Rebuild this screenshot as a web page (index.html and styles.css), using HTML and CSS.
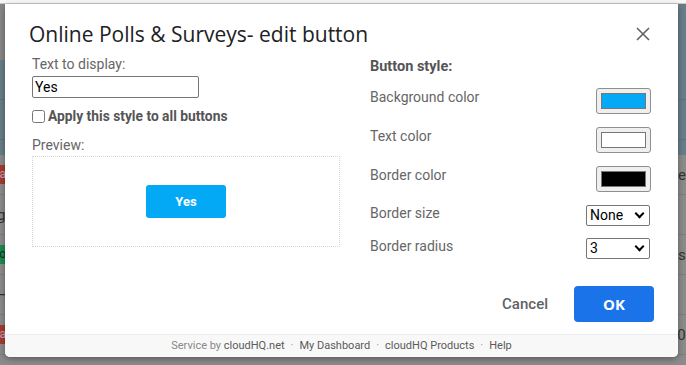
FILE: index.html
```html
<!DOCTYPE html>
<html lang="en">
<head>
    <meta charset="UTF-8">
    <meta name="viewport" content="width=device-width, initial-scale=1.0">
    <title>Online Polls &amp; Surveys - edit button</title>
    <link rel="stylesheet" href="styles.css">
</head>
<body>
    <!-- dimmed mailbox behind the dialog -->
    <div class="page">
        <div class="topbar"></div>
        <div class="band band-gray"></div>
        <div class="band band-slate">
            <div class="row-line"></div>
            <div class="row-line"></div>
        </div>
        <div class="mail-list">
            <div class="mail"><span class="tag tag-red">na</span><span class="tail">ea</span></div>
            <div class="mail"><span class="lead">g</span></div>
            <div class="mail"><span class="tag tag-green">to</span><span class="tail">sh</span></div>
            <div class="mail"><span class="lead">H</span></div>
            <div class="mail"><span class="tag tag-red">na</span><span class="tail">03</span></div>
        </div>
    </div>

    <div class="dialog">
        <div class="dialog-head">
            <h1>Online Polls &amp; Surveys- edit button</h1>
            <button class="close" title="Close">
                <svg width="14" height="14" viewBox="0 0 14 14"><path d="M1 1L13 13M13 1L1 13" stroke="#5f6368" stroke-width="1.6" fill="none"/></svg>
            </button>
        </div>

        <div class="dialog-body">
            <div class="col-left">
                <label class="field-label" for="btn-text">Text to display:</label>
                <input type="text" id="btn-text" class="text-input" value="Yes">
                <label class="check">
                    <input type="checkbox">
                    <span>Apply this style to all buttons</span>
                </label>
                <div class="field-label preview-label">Preview:</div>
                <div class="preview">
                    <span class="preview-btn">Yes</span>
                </div>
            </div>

            <div class="col-right">
                <div class="style-title">Button style:</div>
                <div class="style-row">
                    <span>Background color</span>
                    <span class="swatch"><i style="background: #03a9f4"></i></span>
                </div>
                <div class="style-row">
                    <span>Text color</span>
                    <span class="swatch"><i style="background: #ffffff"></i></span>
                </div>
                <div class="style-row">
                    <span>Border color</span>
                    <span class="swatch"><i style="background: #000000"></i></span>
                </div>
                <div class="style-row row-select">
                    <span>Border size</span>
                    <span class="select">None<b></b></span>
                </div>
                <div class="style-row row-select">
                    <span>Border radius</span>
                    <span class="select">3<b></b></span>
                </div>
            </div>
        </div>

        <div class="actions">
            <button class="btn-cancel">Cancel</button>
            <button class="btn-ok">OK</button>
        </div>

        <div class="dialog-foot">
            Service by <a href="#">cloudHQ.net</a><em>·</em><a href="#">My Dashboard</a><em>·</em><a href="#">cloudHQ Products</a><em>·</em><a href="#">Help</a>
        </div>
    </div>
</body>
</html>
```

FILE: styles.css
```css
* {
    box-sizing: border-box;
    margin: 0;
    padding: 0;
}

body {
    width: 686px;
    height: 365px;
    overflow: hidden;
    position: relative;
    font-family: Roboto, "Liberation Sans", sans-serif;
    background: #8b8b8b;
}

/* background page */
.page {
    display: flex;
    flex-direction: column;
    height: 100%;
}

.topbar {
    height: 4px;
    background: #f7f7f7;
    border-bottom: 1px solid #c9c9c9;
}

.band-gray {
    height: 56px;
    background: linear-gradient(to right, #878787 0 8px, #687d8a 8px);
}

.band-slate {
    height: 95px;
    background: #687d8a;
    display: flex;
    flex-direction: column;
}

.row-line {
    height: 40px;
    border-bottom: 1px solid #5e717d;
}

.mail-list {
    flex: 1;
    display: flex;
    flex-direction: column;
}

.mail {
    height: 40px;
    display: flex;
    align-items: center;
    justify-content: space-between;
    border-bottom: 1px solid #7e7e7e;
    color: #333;
    font-size: 15px;
}

.tag {
    width: 22px;
    height: 19px;
    margin-left: -14px;
    font-size: 12px;
    line-height: 19px;
    text-align: right;
    color: #c9a3ae;
    padding-right: 2px;
}

.tag-red {
    background: #a63a2f;
}

.tag-green {
    background: #1f8a50;
    color: #0a3a20;
}

.lead {
    margin-left: -3px;
    color: #333;
}

.tail {
    margin-right: -8px;
    color: #333;
}

/* dialog */
.dialog {
    position: absolute;
    left: 5px;
    top: 4px;
    width: 673px;
    height: 353px;
    background: #fff;
    border-radius: 0 0 5px 5px;
    box-shadow: 0 2px 6px rgba(0, 0, 0, 0.35);
    display: flex;
    flex-direction: column;
    overflow: hidden;
}

.dialog-head {
    display: flex;
    justify-content: space-between;
    align-items: flex-start;
    padding: 16px 28px 0 24px;
    height: 50px;
}

.dialog-head h1 {
    font-family: "Open Sans", Roboto, sans-serif;
    font-weight: 400;
    font-size: 21px;
    color: #202124;
}

.close {
    background: none;
    border: none;
    margin-top: 7px;
    width: 14px;
    height: 14px;
    cursor: pointer;
}

.dialog-body {
    display: flex;
    padding: 0 0 0 27px;
    height: 227px;
}

.col-left {
    width: 308px;
    display: flex;
    flex-direction: column;
}

.field-label {
    font-size: 14px;
    color: #666;
    height: 20px;
    line-height: 20px;
}

.text-input {
    width: 167px;
    height: 22px;
    border: 1px solid #767676;
    border-radius: 2px;
    padding: 0 2px;
    font-family: Roboto, sans-serif;
    font-size: 14px;
    color: #000;
    margin-top: 2px;
}

.check {
    display: flex;
    align-items: center;
    gap: 3px;
    margin-top: 10px;
    height: 16px;
    font-size: 13.8px;
    font-weight: 700;
    color: #555;
}

.check input {
    width: 13px;
    height: 13px;
    margin: 0;
}

.preview-label {
    margin-top: 11px;
}

.preview {
    margin-top: 1px;
    height: 91px;
    border: 1px dotted #d6d6d6;
    display: flex;
    align-items: center;
    justify-content: center;
}

.preview-btn {
    width: 80px;
    height: 33px;
    line-height: 33px;
    background: #03a9f4;
    color: #fff;
    font-size: 13px;
    font-weight: 700;
    text-align: center;
    border-radius: 3px;
}

.col-right {
    margin-left: 30px;
    width: 281px;
    display: flex;
    flex-direction: column;
}

.style-title {
    margin-top: 3px;
    font-size: 14.5px;
    font-weight: 700;
    color: #555;
    height: 20px;
    line-height: 20px;
    margin-bottom: 11px;
}

.style-row {
    display: flex;
    justify-content: space-between;
    align-items: center;
    height: 39px;
    font-size: 14px;
    color: #666;
}

.style-row > span:first-child {
    margin-top: -21px;
}

.row-select {
    height: 33px;
}

.row-select > span:first-child {
    margin-top: -18px;
}

.swatch {
    align-self: flex-start;
    width: 55px;
    height: 26px;
    border: 1px solid #8f8f8f;
    border-radius: 3px;
    background: #efefef;
    padding: 4px 4px;
    display: flex;
}

.swatch i {
    flex: 1;
    border: 1px solid #777;
}

.select {
    align-self: flex-start;
    width: 64px;
    height: 21px;
    border: 1px solid #767676;
    border-radius: 2px;
    font-size: 14px;
    color: #000;
    padding-left: 3px;
    line-height: 19px;
    display: flex;
    justify-content: space-between;
    align-items: center;
    margin-right: 1px;
}

.select b {
    width: 7px;
    height: 7px;
    border-right: 2px solid #000;
    border-bottom: 2px solid #000;
    transform: rotate(45deg);
    margin: -4px 6px 0 0;
}

.actions {
    display: flex;
    justify-content: flex-end;
    align-items: center;
    gap: 26px;
    padding-right: 24px;
    height: 46px;
}

.btn-cancel {
    background: none;
    border: none;
    font-family: Roboto, sans-serif;
    font-size: 15px;
    font-weight: 500;
    color: #5f6368;
}

.btn-ok {
    width: 80px;
    height: 36px;
    background: #1a73e8;
    color: #fff;
    border: none;
    border-radius: 4px;
    font-family: "Open Sans", Roboto, sans-serif;
    font-size: 15px;
    font-weight: 700;
}

.dialog-foot {
    margin-top: auto;
    height: 23px;
    border-top: 1px solid #ececec;
    background: #f8f8f8;
    text-align: center;
    font-size: 11px;
    line-height: 22px;
    color: #888;
}

.dialog-foot a {
    color: #5a5a5a;
    text-decoration: none;
}

.dialog-foot em {
    font-style: normal;
    margin: 0 6px;
    color: #999;
}
```
